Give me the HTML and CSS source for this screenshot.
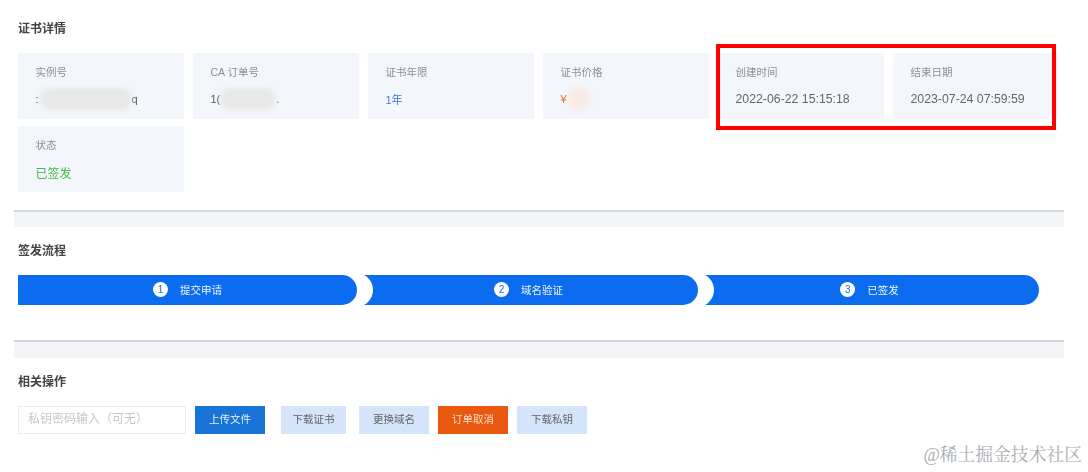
FILE: index.html
```html
<!DOCTYPE html>
<html lang="zh-CN">
<head>
    <meta charset="UTF-8">
    <meta name="viewport" content="width=device-width, initial-scale=1.0">
    <title>证书详情</title>
    <link rel="stylesheet" href="styles.css">
</head>
<body>
    <div class="container">
        <div class="section section-detail">
            <h3 class="title">证书详情</h3>
            <div class="info-grid">
                <div class="info-card">
                    <div class="label">实例号</div>
                    <div class="value"><span>:</span><i class="blob blob-id"></i><span>q</span></div>
                </div>
                <div class="info-card">
                    <div class="label">CA 订单号</div>
                    <div class="value"><span>1(</span><i class="blob blob-order"></i><span>.</span></div>
                </div>
                <div class="info-card">
                    <div class="label">证书年限</div>
                    <div class="value value-blue">1年</div>
                </div>
                <div class="info-card">
                    <div class="label">证书价格</div>
                    <div class="value value-orange"><span>¥</span><i class="blob blob-price"></i></div>
                </div>
                <div class="info-card">
                    <div class="label">创建时间</div>
                    <div class="value value-date">2022-06-22 15:15:18</div>
                </div>
                <div class="info-card">
                    <div class="label">结束日期</div>
                    <div class="value value-date">2023-07-24 07:59:59</div>
                </div>
                <div class="info-card">
                    <div class="label">状态</div>
                    <div class="value value-green">已签发</div>
                </div>
            </div>
        </div>

        <div class="divider"></div>

        <div class="section section-flow">
            <h3 class="title">签发流程</h3>
            <div class="steps">
                <div class="step step-first"><span class="step-num">1</span>提交申请</div>
                <div class="step"><span class="step-num">2</span>域名验证</div>
                <div class="step"><span class="step-num">3</span>已签发</div>
            </div>
        </div>

        <div class="divider divider-low"></div>

        <div class="section section-actions">
            <h3 class="title">相关操作</h3>
            <div class="actions">
                <input class="key-input" type="text" placeholder="私钥密码输入（可无）">
                <button class="btn btn-primary">上传文件</button>
                <button class="btn btn-light btn-download">下载证书</button>
                <button class="btn btn-light btn-change">更换域名</button>
                <button class="btn btn-danger">订单取消</button>
                <button class="btn btn-light">下载私钥</button>
            </div>
        </div>
    </div>

    <div class="highlight"></div>
    <div class="watermark">@稀土掘金技术社区</div>
</body>
</html>
```

FILE: styles.css
```css
body {
    margin: 0;
    background: #fff;
    color: #555;
    font-family: "Liberation Sans", "Noto Sans CJK SC", sans-serif;
    height: 472px;
    overflow: hidden;
    position: relative;
}
.container {
    width: 1050px;
    margin-left: 14px;
    filter: blur(0.7px);
}
.section {
    padding-left: 4px;
}
.section-detail {
    padding-top: 20px;
    padding-bottom: 18px;
}
.section-flow {
    padding-top: 15px;
    padding-bottom: 35px;
}
.section-actions {
    padding-top: 15px;
}
.title {
    margin: 0 0 15px;
    font-size: 12px;
    line-height: 18px;
    font-weight: bold;
    color: #444;
}
.info-grid {
    display: grid;
    grid-template-columns: repeat(6, 166px);
    gap: 7px 9px;
}
.info-card {
    height: 66px;
    box-sizing: border-box;
    padding: 11px 17.5px 0;
    background: #f3f6fb;
}
.label {
    font-size: 10.5px;
    line-height: 16px;
    color: #8b8f96;
}
.value {
    display: flex;
    align-items: center;
    height: 22px;
    margin-top: 8px;
    font-size: 11px;
    color: #555;
}
.value-blue {
    color: #3a78ee;
}
.value-orange {
    color: #e8742c;
}
.value-green {
    color: #45b649;
    font-size: 12px;
}
.value-date {
    font-size: 12.3px;
    color: #666;
}
.blob {
    display: block;
    border-radius: 10px;
    filter: blur(2px);
}
.blob-id {
    width: 92px;
    height: 22px;
    margin-left: 1px;
    background: #e8e8e8;
}
.blob-order {
    width: 56px;
    height: 22px;
    background: #e9e9e9;
}
.blob-price {
    width: 22px;
    height: 24px;
    margin-left: 1px;
    background: #f8ebe5;
}
.divider {
    height: 17px;
    box-sizing: border-box;
    border-top: 2px solid #d3d6da;
    background: #f3f5f7;
}
.divider-low {
    height: 18px;
}
.steps {
    display: flex;
    gap: 2px;
    width: 1021px;
}
.step {
    flex: 1;
    position: relative;
    overflow: hidden;
    height: 30px;
    box-sizing: border-box;
    padding-bottom: 2px;
    display: flex;
    align-items: center;
    justify-content: center;
    border-radius: 0 15px 15px 0;
    background: #0b6cf0;
    color: #f0f5ff;
    font-size: 10.5px;
}
/* the round notch at the start of steps 2 and 3 */
.step::before {
    content: "";
    position: absolute;
    left: -20px;
    top: -2px;
    width: 34px;
    height: 34px;
    border-radius: 50%;
    background: #fff;
}
.step-first::before {
    display: none;
}
.step-num {
    width: 15px;
    height: 15px;
    margin-right: 12px;
    border-radius: 50%;
    background: #fff;
    color: #0b6cf0;
    font-size: 10px;
    line-height: 15px;
    text-align: center;
}
.actions {
    display: flex;
    align-items: center;
}
.key-input {
    width: 168px;
    height: 28px;
    box-sizing: border-box;
    margin-right: 9px;
    padding: 0 9px 2px;
    border: 1px solid #eceef1;
    background: #fff;
    font-family: inherit;
    font-size: 12px;
}
.key-input::placeholder {
    color: #c4c7cc;
}
.btn {
    height: 28px;
    width: 70px;
    margin-right: 9px;
    padding: 0 0 3px;
    border: none;
    font-family: inherit;
    font-size: 10.5px;
}
.btn-primary {
    margin-right: 16px;
    background: #1874d6;
    color: #e6f0fb;
}
.btn-light {
    background: #d4e4fa;
    color: #666;
}
.btn-download {
    width: 65px;
    margin-right: 13px;
}
.btn-danger {
    background: #e9580f;
    color: #fbdcc8;
}
.highlight {
    position: absolute;
    left: 716px;
    top: 44px;
    width: 340px;
    height: 86px;
    box-sizing: border-box;
    border: 4px solid #f00;
}
.watermark {
    position: absolute;
    right: 6px;
    top: 444px;
    font-family: "Liberation Serif", "Noto Serif CJK SC", "Noto Sans CJK SC", serif;
    font-size: 17.8px;
    line-height: 22px;
    color: #a9adb1;
}
```
